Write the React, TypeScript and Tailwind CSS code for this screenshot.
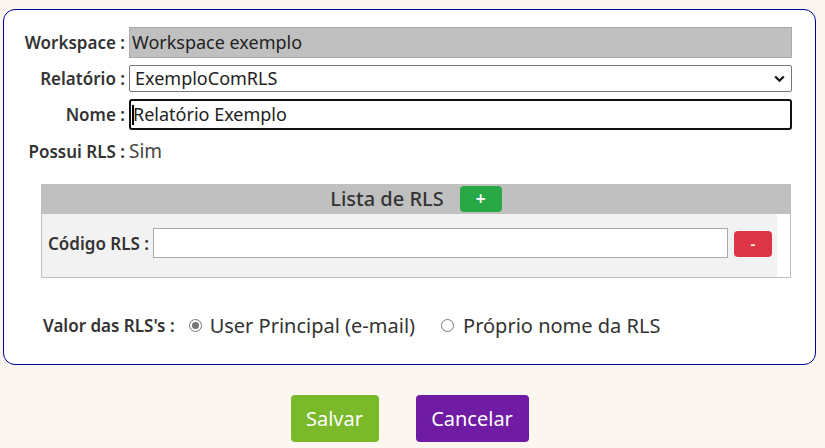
import React from "react";

function Radio({ checked }: { checked?: boolean }) {
  return (
    <span className="inline-flex h-[13px] w-[13px] items-center justify-center rounded-full border border-[#767676] bg-white">
      {checked ? <span className="h-[7px] w-[7px] rounded-full bg-[#767676]" /> : null}
    </span>
  );
}

export default function App() {
  return (
    <div
      className="min-h-[448px] w-full bg-[#fbf6f0] pt-[9px] text-[#333]"
      style={{ fontFamily: '"Noto Sans", "Open Sans", sans-serif' }}
    >
      <div className="ml-[3px] w-[813px] h-[356px] rounded-[12px] border border-[#000099] bg-white pt-[17px] pl-[16px] pr-[23px]">
        <div className="grid grid-cols-[105px_1fr] gap-x-[4px] gap-y-[7px] items-center">
          <div className="text-right text-[17px] font-semibold whitespace-nowrap">Workspace :</div>
          <div className="h-[31px] border border-[#a9a9a9] bg-[#c0c0c0] pl-[2px] text-[18px] leading-[29px] text-[#222]">Workspace exemplo</div>

          <div className="text-right text-[17px] font-semibold whitespace-nowrap">Relatório :</div>
          <div className="relative h-[27px] rounded-[2px] border border-[#767676] bg-white pl-[5px] text-[18px] leading-[25px] text-[#222]">
            ExemploComRLS
            <svg className="absolute right-[6px] top-[9px]" width="11" height="8" viewBox="0 0 11 8">
              <path d="M1.2 1.5 L5.5 5.8 L9.8 1.5" fill="none" stroke="#111" strokeWidth="2.2" />
            </svg>
          </div>

          <div className="text-right text-[17px] font-semibold whitespace-nowrap">Nome :</div>
          <div className="flex h-[31px] items-center rounded-[3px] border-2 border-[#111] bg-white pl-[1px] text-[18px] text-[#222]">
            <span className="mr-[-1px] h-[20px] w-[2px] bg-black" />
            <span>Relatório Exemplo</span>
          </div>

          <div className="text-right text-[17px] font-semibold whitespace-nowrap">Possui RLS :</div>
          <div className="text-[19px] text-[#444]">Sim</div>
        </div>

        <div className="ml-[21px] mt-[18px] w-[750px]">
          <div className="flex h-[30px] items-center justify-center gap-[16px] bg-[#c0c0c0]">
            <span className="text-[20px] font-medium">Lista de RLS</span>
            <span className="flex h-[26px] w-[42px] items-center justify-center rounded-[4px] bg-[#28a745] text-[18px] font-semibold text-white">+</span>
          </div>
          <div className="flex h-[64px] border border-t-0 border-[#c0c0c0]">
            <div className="flex flex-1 items-start bg-[#f2f2f2] pl-[6px] pt-[14px]">
              <span className="mt-[3px] whitespace-nowrap text-[17px] font-semibold">Código RLS :</span>
              <div className="ml-[4px] h-[30px] flex-1 border border-[#a9a9a9] bg-white" />
              <span className="ml-[6px] mr-[5px] mt-[3px] flex h-[26px] w-[38px] items-center justify-center rounded-[4px] bg-[#dc3545] text-[15px] font-semibold text-white">-</span>
            </div>
            <div className="w-[13px] bg-white" />
          </div>
        </div>

        <div className="mt-[33px] flex items-center pl-[23px]">
          <span className="whitespace-nowrap text-[17px] font-semibold">Valor das RLS's :</span>
          <span className="ml-[14px] flex items-center gap-[8px]">
            <Radio checked />
            <span className="text-[20px]">User Principal (e-mail)</span>
          </span>
          <span className="ml-[26px] flex items-center gap-[9px]">
            <Radio />
            <span className="text-[20px]">Próprio nome da RLS</span>
          </span>
        </div>
      </div>

      <div className="ml-[3px] mt-[30px] flex w-[813px] justify-center gap-[37px]">
        <span className="flex h-[47px] w-[88px] items-center justify-center rounded-[4px] bg-[#79b92a] text-[20px] text-white">Salvar</span>
        <span className="flex h-[47px] w-[113px] items-center justify-center rounded-[4px] bg-[#6f1ba4] text-[20px] text-white">Cancelar</span>
      </div>
    </div>
  );
}
